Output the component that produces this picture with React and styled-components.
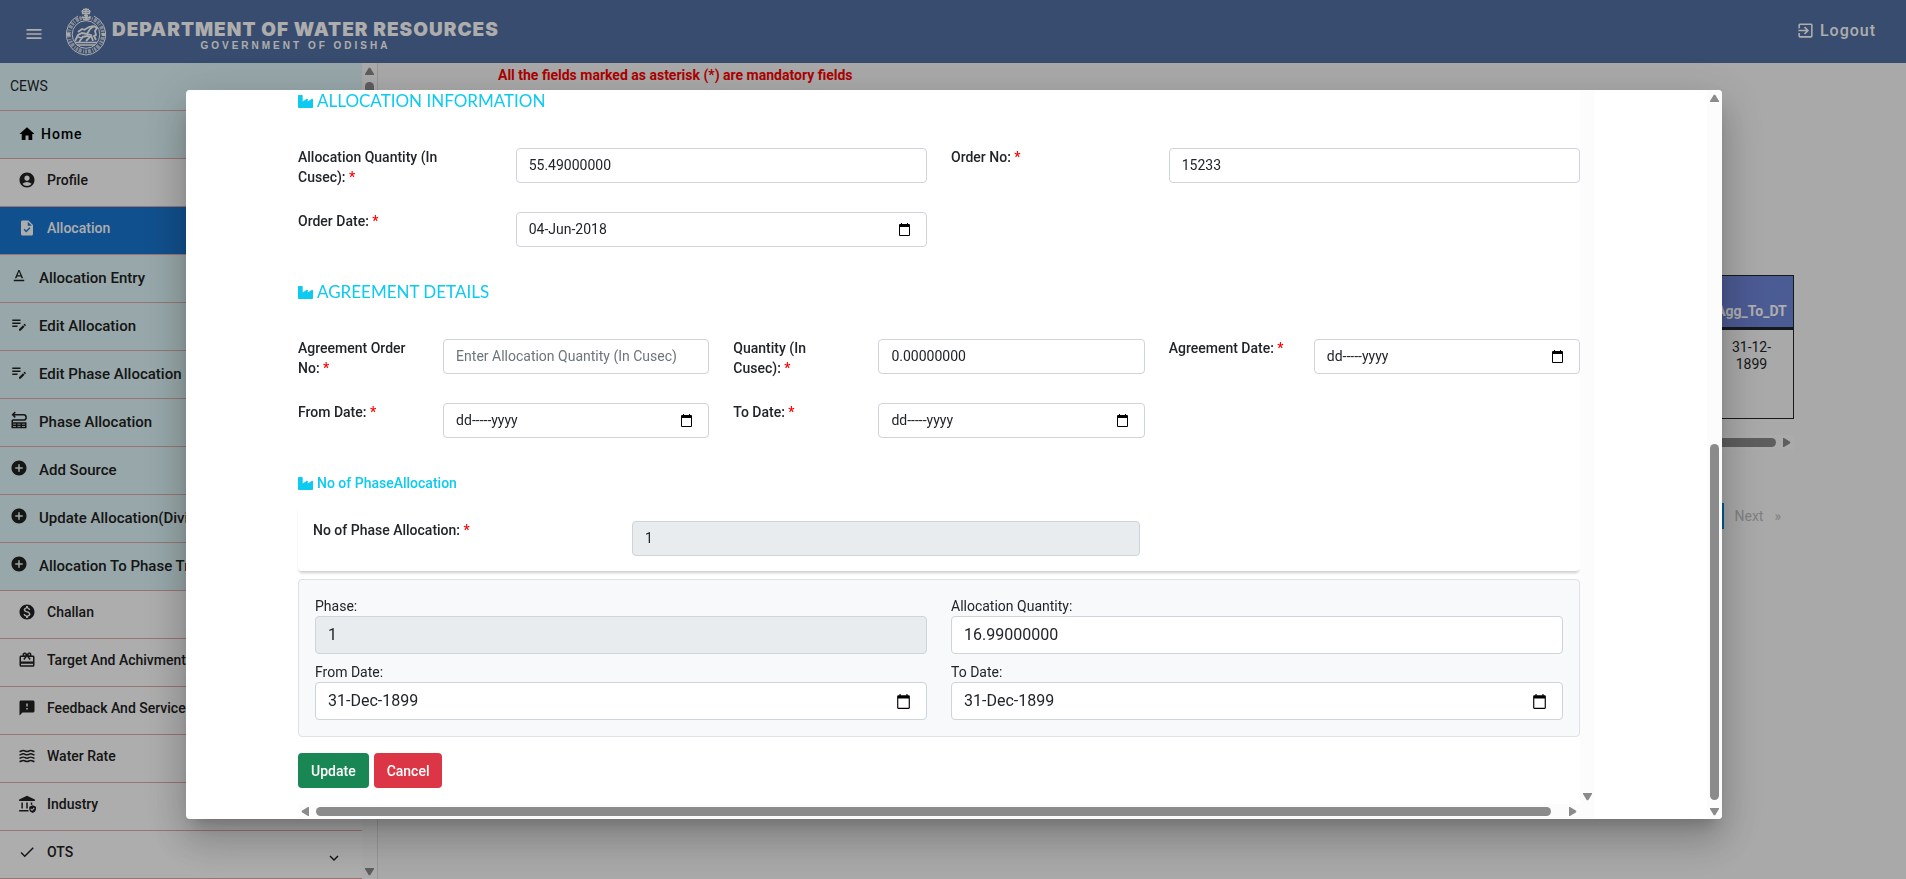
import { useState } from 'react'
import styled, { createGlobalStyle } from 'styled-components';
import {
    MdMenu, MdHome, MdAccountCircle, MdTask, MdTextFormat, MdEditNote, MdAddCircle,
    MdMonetizationOn, MdCardGiftcard, MdFeedback, MdWaves, MdCheck, MdExpandMore, MdExitToApp,
} from 'react-icons/md';
import { FaIndustry } from 'react-icons/fa';

const GlobalStyle = createGlobalStyle`
    *, *::before, *::after {
        box-sizing: border-box;
    }

    body {
        margin: 0;
        background: #fafafa;
        color: #212529;
        font-family: Roboto, "Liberation Sans", sans-serif;
        font-size: 14px;
        line-height: 20px;
        overflow: hidden;
    }

    button, input {
        font-family: inherit;
    }
`;

/* ---------- header ---------- */

const TopBar = styled.header`
    display: flex;
    align-items: center;
    height: 63px;
    padding: 0 30px 0 24px;
    background: #5270a3;
    color: #fff;
`;

const MenuButton = styled.button`
    display: flex;
    padding: 4px 0 0;
    border: 0;
    background: none;
    color: inherit;
    font-size: 20px;
`;

const Brand = styled.div`
    display: flex;
    align-items: center;
    margin-left: 20px;
    gap: 4px;
`;

const BrandText = styled.div`
    display: flex;
    flex-direction: column;
    padding-top: 11px;
`;

const BrandTitle = styled.h1`
    margin: 0;
    font-family: Inter, "Liberation Sans", sans-serif;
    font-size: 19px;
    line-height: 18px;
    font-weight: 900;
    letter-spacing: 1px;
`;

const BrandSub = styled.span`
    padding-right: 20px;
    font-family: "Liberation Sans", sans-serif;
    font-size: 10px;
    line-height: 14px;
    font-weight: 700;
    letter-spacing: 3px;
    text-align: center;
`;

const Logout = styled.a`
    display: flex;
    align-items: center;
    gap: 5px;
    margin-left: auto;
    padding-bottom: 2px;
    color: inherit;
    font-size: 16px;
    font-weight: 500;
    letter-spacing: 1px;
    text-decoration: none;

    svg {
        font-size: 19px;
    }
`;

/* ---------- sidebar ---------- */

const Body = styled.div`
    display: flex;
    min-height: calc(100vh - 63px);
`;

const Sidebar = styled.aside`
    display: flex;
    flex: 0 0 378px;
    border-right: 1px solid #e0e0e0;
    background: #fff;
`;

const Menu = styled.nav`
    flex: 1;
`;

const rows = {
    home: { shade: '#e0f7fa', ink: '#000', gap: 5, padding: '0 18px 2px' },
    item: { shade: '#fff', ink: '#212121', gap: 11, padding: '0 18px 6px' },
    active: { shade: '#1976d2', ink: '#fff', gap: 11, padding: '0 18px 6px' },
    sub: { shade: '#e0f7fa', ink: '#212121', gap: 11, padding: '0 10px 2px' },
};

const MenuRow = styled.a`
    display: flex;
    align-items: center;
    gap: ${p => rows[p.$kind].gap}px;
    height: 48px;
    padding: ${p => rows[p.$kind].padding};
    border-bottom: 1px solid #e0acac;
    background: ${p => rows[p.$kind].shade};
    color: ${p => rows[p.$kind].ink};
    font-size: ${p => (p.$kind === 'sub' ? 15 : 14)}px;
    font-weight: 500;
    letter-spacing: ${p => (p.$kind === 'home' ? '1px' : 'normal')};
    white-space: nowrap;
    text-decoration: none;

    svg {
        flex: none;
        width: 18px;
        height: 18px;
        margin-bottom: ${p => (p.$kind === 'sub' ? 4 : 0)}px;
    }

    svg:last-child {
        margin: 12px 1px 0 auto;
    }
`;

const MenuTitle = styled.div`
    height: 48px;
    padding: 13px 10px;
    border-bottom: 1px solid #e0acac;
    background: #e0f7fa;
`;

/* ---------- page behind the dialog ---------- */

const Main = styled.main`
    flex: 1;
    min-width: 0;
    padding: 2px 112px 0 120px;
`;

const Notice = styled.p`
    margin: 0 0 190px;
    color: #f00;
    font-weight: 700;
`;

const DataTable = styled.table`
    width: 100%;
    border-collapse: collapse;
    table-layout: fixed;
    text-align: center;

    th, td {
        border: 1px solid #212529;
    }

    th {
        height: 53px;
        padding: 18px 0 0;
        border-bottom-width: 3px;
        background: #6f86d9;
        color: #fff;
    }

    td {
        height: 90px;
        padding: 9px 16px;
        line-height: 17px;
        vertical-align: top;
    }

    th:last-child {
        width: 84px;
    }
`;

const TableScroll = styled.div`
    margin-top: 16px;
`;

const Pager = styled.div`
    display: flex;
    justify-content: flex-end;
    gap: 11px;
    margin-top: 53px;
    padding-right: 13px;
    color: #bdbdbd;
`;

const PageButton = styled.button`
    height: 26px;
    padding: 0;
    border: 0;
    border-right: ${p => (p.$current ? '2px solid #0288d1' : '0')};
    background: none;
    color: inherit;
    font-size: 14px;
`;

/* ---------- scroll bars ---------- */

const Bar = styled.div`
    display: flex;
    flex-direction: ${p => (p.$across ? 'row' : 'column')};
    align-items: center;
    justify-content: space-between;
    flex: none;
    gap: 6px;
    ${p => (p.$across ? 'height' : 'width')}: 15px;
    padding: ${p => (p.$across ? '0 3px' : '4px 0 3px')};
    background: #fcfcfc;

    svg {
        flex: none;
        fill: #8b8b8b;
    }
`;

const Track = styled.div`
    display: flex;
    flex: 1;
    flex-direction: ${p => (p.$across ? 'row' : 'column')};
    align-self: stretch;
    padding: ${p => (p.$across ? '3px 0' : '0 3px')};
`;

const Thumb = styled.div`
    flex: ${p => p.$size};
    border-radius: 5px;
    background: #8b8b8b;
`;

const Space = styled.div`
    flex: ${p => p.$size};
`;

const arrows = {
    up: 'M3.800 .8h1.400L9 7v1H0V7z',
    down: 'M3.800 8.200h1.400L9 2V1H0v1z',
    left: 'M.8 3.800v1.400L7 9h1V0H7z',
    right: 'M8.200 3.800v1.400L2 9H1V0h1z',
};

function Arrow({ to }) {
    return <svg width="9" height="9" viewBox="0 0 9 9" aria-hidden="true"><path d={arrows[to]} /></svg>;
}

function ScrollBar({ across, before, thumb, after }) {
    return (
        <Bar $across={across} aria-hidden="true">
            <Arrow to={across ? 'left' : 'up'} />
            <Track $across={across}>
                <Space $size={before} />
                <Thumb $size={thumb} />
                <Space $size={after} />
            </Track>
            <Arrow to={across ? 'right' : 'down'} />
        </Bar>
    );
}

/* ---------- dialog ---------- */

const Backdrop = styled.div`
    position: fixed;
    inset: 0;
    display: flex;
    padding: 90px 184px 60px 186px;
    background: rgba(0, 0, 0, 0.32);
`;

const Dialog = styled.section`
    display: flex;
    flex: 1;
    min-width: 0;
    border-radius: 4px;
    background: #fff;
    overflow: hidden;
    box-shadow: 0 11px 15px -7px rgba(0, 0, 0, 0.2), 0 24px 38px 3px rgba(0, 0, 0, 0.14),
        0 9px 46px 8px rgba(0, 0, 0, 0.12);
`;

const Pane = styled.div`
    display: flex;
    flex: 1;
    flex-direction: column;
    min-width: 0;
    margin: 0 112px;
`;

const PaneRow = styled.div`
    display: flex;
    flex: 1;
    min-height: 0;
`;

/* bottom bar stops short of the side bar */
const PaneFoot = styled.div`
    padding-right: 15px;
    background: #fcfcfc;
`;

const SideStrip = styled.div`
    display: flex;
    align-items: flex-end;
    justify-content: center;
    width: 15px;
    padding-bottom: 3px;
    background: #fcfcfc;

    svg {
        fill: #8b8b8b;
    }
`;

const Form = styled.form`
    flex: 1;
    min-width: 0;
    padding-top: 1px;
`;

const Heading = styled.h2`
    display: flex;
    align-items: center;
    gap: 4px;
    margin: 0;
    color: #0dcaf0;
    font-family: ${p => (p.$plain ? 'inherit' : 'Lato, "Liberation Sans", sans-serif')};
    font-size: ${p => (p.$plain ? 14 : 17)}px;
    line-height: 20px;
    font-weight: ${p => (p.$plain ? 500 : 400)};

    svg {
        font-size: 15px;
    }
`;

const Fields = styled.div`
    display: grid;
    grid-template-columns: repeat(${p => p.$cols}, minmax(0, 1fr));
    gap: 29px 24px;
    padding: 37px 0 35px;
`;

const Field = styled.div`
    display: grid;
    grid-template-columns: repeat(3, minmax(0, 1fr));
    column-gap: 24px;
    height: 35px;
`;

const Label = styled.label`
    grid-column: span ${p => p.$span || 1};
    margin-top: -1px;
    padding-right: 5px;
    font-weight: 500;

    span {
        color: #f00;
    }
`;

const Control = styled.div`
    display: flex;
    align-items: center;
    grid-column: span ${p => p.$span || 2};
    height: ${p => (p.$large ? 38 : 35)}px;
    padding-right: 16px;
    border: 1px solid #ced4da;
    border-radius: 4px;
    background: ${p => (p.$off ? '#e9ecef' : '#fff')};
`;

const Input = styled.input`
    flex: 1;
    min-width: 0;
    padding: 6px 0 6px 12px;
    border: 0;
    outline: 0;
    background: none;
    color: #212529;
    font-size: ${p => (p.$large ? 16 : 14)}px;
    line-height: ${p => (p.$large ? 24 : 21)}px;

    &::placeholder {
        color: #6c757d;
        opacity: 1;
    }
`;

const PhaseCount = styled.div`
    display: grid;
    grid-template-columns: repeat(12, minmax(0, 1fr));
    column-gap: 24px;
    margin-top: 12px;
    padding: 16px 15px 15px;
    border-radius: 4px;
    box-shadow: 0 3px 3px -1px rgba(0, 0, 0, 0.2);
`;

const PhaseBox = styled.fieldset`
    display: grid;
    grid-template-columns: repeat(2, minmax(0, 1fr));
    gap: 8px 24px;
    margin: 8px 0 16px;
    padding: 16px;
    border: 1px solid #dee2e6;
    border-radius: 4px;
    background: #f8f9fa;
`;

const Stack = styled.div`
    display: flex;
    flex-direction: column;
`;

const Actions = styled.div`
    display: flex;
    gap: 5px;
`;

const Button = styled.button`
    height: 35px;
    padding: 0 13px;
    border: 0;
    border-radius: 4px;
    background: ${p => (p.$danger ? '#dc3545' : '#198754')};
    color: #fff;
    font-size: 14px;
    font-weight: 500;
`;

/* ---------- drawings ---------- */

function Emblem() {
    return (
        <svg width="44" height="48" viewBox="0 0 44 48" fill="none" stroke="#fff" aria-hidden="true">
            <path d="M14 8A20.500 20.500 0 0 0 22 47 20.500 20.500 0 0 0 30 8" strokeWidth="1" />
            <circle cx="22" cy="26.500" r="17" strokeWidth="4" strokeDasharray="2 1 1 1.500 3 1" strokeDashoffset="3" opacity="0.650" />
            <circle cx="22" cy="26.500" r="13.800" strokeWidth="1" />
            <path d="M19 1.500h6M17.500 3.500h9M18 5.500h8M20 7.500h4M17.500 9.500h9M19 11.500h6" strokeWidth="1.500" />
            <path d="M18.500 2v4M25.500 2v4M22 0v12" strokeWidth="1.200" />
            <path d="M11 34.500h22M13 37h18" strokeWidth="1.400" />
            <path d="M11 33l3-6 4-2 5 1 3-5 4-3 3 2-2 3 1 4-2 1 2 4M14 29l4 1-3 4M18 29l5-1 3 1-4 4M23 26l4 1 2 6M20 22l5-3 4-1M14 24l4-3 3 1" strokeWidth="1.800" />
            <circle cx="4.500" cy="26.500" r="1.800" fill="#fff" stroke="none" />
            <circle cx="39.500" cy="26.500" r="1.800" fill="#fff" stroke="none" />
        </svg>
    );
}

function PhaseIcon() {
    return (
        <svg viewBox="0 0 24 24" fill="none" stroke="currentColor" strokeWidth="2" aria-hidden="true">
            <path d="M7 1.500 3.500 5 7 8.500M3.500 5H18a3 3 0 0 1 0 7H3" />
            <path d="M3 16h18v6H3zM3 12v4M3 19h18M9 16v6M15 16v6" />
        </svg>
    );
}

function IndustryIcon() {
    return (
        <svg viewBox="0 0 24 24" fill="currentColor" aria-hidden="true">
            <path d="M12 1 1.500 6v2h21V6zM4.500 10h2v8h-2zM11 10h2v8h-2zM17 10h2v3h-2zM1.500 20H14v2H1.500z" />
            <path d="M19.500 13.500 24 15.500v3.200c0 2.400-1.900 4.500-4.500 5.300-2.600-.8-4.500-2.900-4.500-5.300v-3.200zm-.8 7.800 3.500-3.500-1-1-2.500 2.400-1.200-1.100-1 1z" fillRule="evenodd" />
        </svg>
    );
}

function CalendarIcon({ large }) {
    return (
        <svg width={large ? 13 : 11} height={large ? 15 : 13} viewBox="0 0 11 13" aria-hidden="true">
            <path d="M2 0h1v1h5V0h1v1h1a1 1 0 0 1 1 1v10a1 1 0 0 1-1 1H1a1 1 0 0 1-1-1V2a1 1 0 0 1 1-1h1zM1 4v8h9V4z" fillRule="evenodd" />
        </svg>
    );
}

/* ---------- parts ---------- */

const menu = [
    { kind: 'home', text: 'Home', icon: MdHome },
    { kind: 'item', text: 'Profile', icon: MdAccountCircle },
    { kind: 'active', text: 'Allocation', icon: MdTask },
    { kind: 'sub', text: 'Allocation Entry', icon: MdTextFormat },
    { kind: 'sub', text: 'Edit Allocation', icon: MdEditNote },
    { kind: 'sub', text: 'Edit Phase Allocation', icon: MdEditNote },
    { kind: 'sub', text: 'Phase Allocation', icon: PhaseIcon },
    { kind: 'sub', text: 'Add Source', icon: MdAddCircle },
    { kind: 'sub', text: 'Update Allocation(Division)', icon: MdAddCircle },
    { kind: 'sub', text: 'Allocation To Phase Transfer', icon: MdAddCircle },
    { kind: 'item', text: 'Challan', icon: MdMonetizationOn },
    { kind: 'item', text: 'Target And Achivment', icon: MdCardGiftcard },
    { kind: 'item', text: 'Feedback And Services', icon: MdFeedback },
    { kind: 'item', text: 'Water Rate', icon: MdWaves },
    { kind: 'item', text: 'Industry', icon: IndustryIcon },
    { kind: 'item', text: 'OTS', icon: MdCheck, more: true },
];

function TextBox({ id, value = '', placeholder, date, large, off, span }) {
    const [text, setText] = useState(value);
    return (
        <Control $large={large} $off={off} $span={span}>
            <Input
                id={id}
                value={text}
                placeholder={placeholder}
                disabled={off}
                $large={large}
                onChange={e => setText(e.target.value)}
            />
            {date && <CalendarIcon large={large} />}
        </Control>
    );
}

function LabelledField({ id, label, ...rest }) {
    return (
        <Field>
            <Label htmlFor={id}>{label} <span>*</span></Label>
            <TextBox id={id} {...rest} />
        </Field>
    );
}

function StackedField({ id, label, ...rest }) {
    return (
        <Stack>
            <label htmlFor={id}>{label}</label>
            <TextBox id={id} large span={1} {...rest} />
        </Stack>
    );
}

function AllocationForm() {
    return (
        <Form onSubmit={e => e.preventDefault()}>
            <Heading><FaIndustry /> ALLOCATION INFORMATION</Heading>
            <Fields $cols={2}>
                <LabelledField id="quantity" label="Allocation Quantity (In Cusec):" value="55.49000000" />
                <LabelledField id="orderNo" label="Order No:" value="15233" />
                <LabelledField id="orderDate" label="Order Date:" value="04-Jun-2018" date />
            </Fields>

            <Heading><FaIndustry /> AGREEMENT DETAILS</Heading>
            <Fields $cols={3}>
                <LabelledField id="agreementNo" label="Agreement Order No:" placeholder="Enter Allocation Quantity (In Cusec)" />
                <LabelledField id="agreementQty" label="Quantity (In Cusec):" value="0.00000000" />
                <LabelledField id="agreementDate" label="Agreement Date:" value="dd-----yyyy" date />
                <LabelledField id="fromDate" label="From Date:" value="dd-----yyyy" date />
                <LabelledField id="toDate" label="To Date:" value="dd-----yyyy" date />
            </Fields>

            <Heading $plain><FaIndustry /> No of PhaseAllocation</Heading>
            <PhaseCount>
                <Label htmlFor="phaseCount" $span={3}>No of Phase Allocation: <span>*</span></Label>
                <TextBox id="phaseCount" value="1" off span={5} />
            </PhaseCount>

            <PhaseBox>
                <StackedField id="phase" label="Phase:" value="1" off />
                <StackedField id="phaseQty" label="Allocation Quantity:" value="16.99000000" />
                <StackedField id="phaseFrom" label="From Date:" value="31-Dec-1899" date />
                <StackedField id="phaseTo" label="To Date:" value="31-Dec-1899" date />
            </PhaseBox>

            <Actions>
                <Button type="submit">Update</Button>
                <Button type="button" $danger>Cancel</Button>
            </Actions>
        </Form>
    );
}

export default function App() {
    return (
        <>
            <GlobalStyle />
            <TopBar>
                <MenuButton type="button" aria-label="Menu"><MdMenu /></MenuButton>
                <Brand>
                    <Emblem />
                    <BrandText>
                        <BrandTitle>DEPARTMENT OF WATER RESOURCES</BrandTitle>
                        <BrandSub>GOVERNMENT OF ODISHA</BrandSub>
                    </BrandText>
                </Brand>
                <Logout href="#logout"><MdExitToApp /> Logout</Logout>
            </TopBar>

            <Body>
                <Sidebar>
                    <Menu>
                        <MenuTitle>CEWS</MenuTitle>
                        {menu.map(({ kind, text, icon: Icon, more }) => (
                            <MenuRow key={text} href="#menu" $kind={kind}>
                                <Icon />
                                <span>{text}</span>
                                {more && <MdExpandMore />}
                            </MenuRow>
                        ))}
                    </Menu>
                    <ScrollBar before={0} thumb={3} after={1} />
                </Sidebar>

                <Main>
                    <Notice>All the fields marked as asterisk (*) are mandatory fields</Notice>
                    <DataTable>
                        <thead>
                            <tr><th></th><th>Agg_To_DT</th></tr>
                        </thead>
                        <tbody>
                            <tr><td></td><td>31-12-1899</td></tr>
                        </tbody>
                    </DataTable>
                    <TableScroll>
                        <ScrollBar across before={0} thumb={1} after={0} />
                    </TableScroll>
                    <Pager>
                        <PageButton type="button" $current aria-label="Current page" />
                        <PageButton type="button">Next</PageButton>
                        <PageButton type="button" aria-label="Last page">»</PageButton>
                    </Pager>
                </Main>
            </Body>

            <Backdrop>
                <Dialog role="dialog" aria-label="Allocation">
                    <Pane>
                        <PaneRow>
                            <AllocationForm />
                            <SideStrip><Arrow to="down" /></SideStrip>
                        </PaneRow>
                        <PaneFoot>
                            <ScrollBar across before={0} thumb={112} after={1} />
                        </PaneFoot>
                    </Pane>
                    <ScrollBar before={336} thumb={358} after={1} />
                </Dialog>
            </Backdrop>
        </>
    );
}
